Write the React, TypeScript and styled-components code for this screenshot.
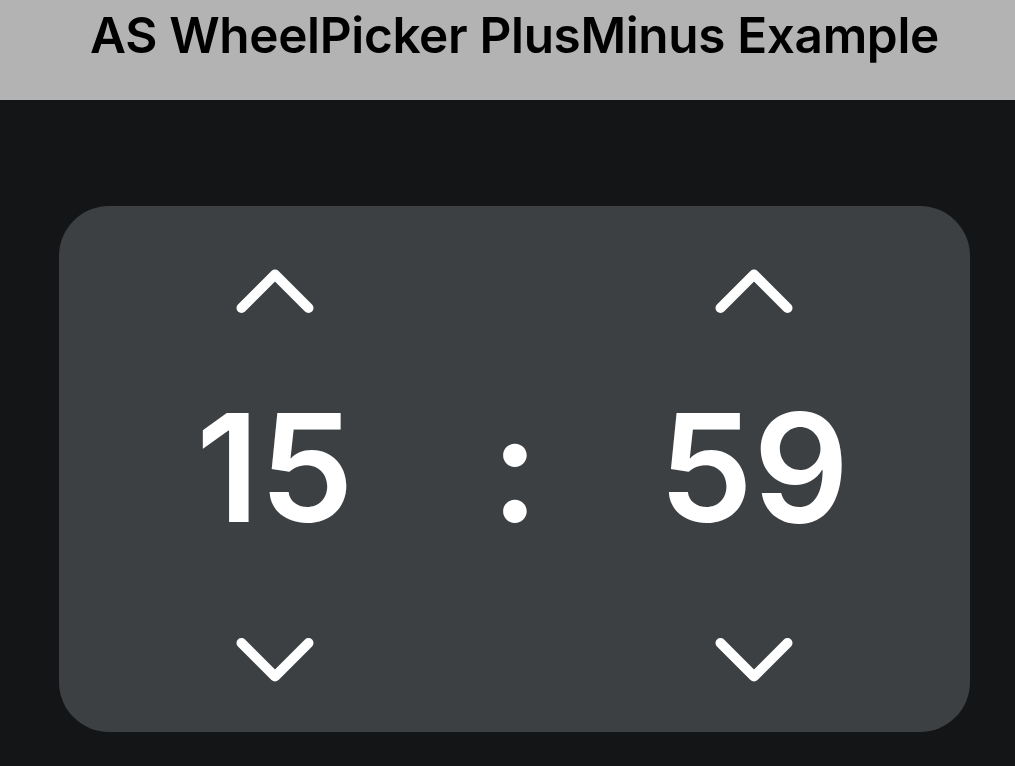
import React, { useState } from "react";
import styled, { createGlobalStyle } from "styled-components";

const GlobalStyle = createGlobalStyle`
  html, body {
    margin: 0;
    padding: 0;
    background: #141517;
  }
  body {
    font-family: Inter, "Noto Sans", sans-serif;
  }
`;

const pad = (n: number) => String(n).padStart(2, "0");

const Chevron: React.FC<{ down?: boolean }> = ({ down }) => (
  <svg width="84" height="48" viewBox="0 0 84 48">
    <polyline
      points={down ? "8.5,7 42,40.5 75.5,7" : "8.5,41 42,7.5 75.5,41"}
      fill="none"
      stroke="#ffffff"
      strokeWidth="10"
      strokeLinecap="round"
      strokeLinejoin="round"
    />
  </svg>
);

interface WheelProps {
  value: number;
  max: number;
  onChange: (v: number) => void;
}

const Wheel: React.FC<WheelProps> = ({ value, max, onChange }) => (
  <Column>
    <StepButton $up onClick={() => onChange(value >= max ? 0 : value + 1)}>
      <Chevron />
    </StepButton>
    <Digits>{pad(value)}</Digits>
    <StepButton onClick={() => onChange(value <= 0 ? max : value - 1)}>
      <Chevron down />
    </StepButton>
  </Column>
);

const App: React.FC = () => {
  const [hours, setHours] = useState(15);
  const [minutes, setMinutes] = useState(59);

  return (
    <>
      <GlobalStyle />
      <Header>
        <Title>AS WheelPicker PlusMinus Example</Title>
      </Header>
      <Main>
        <Card>
          <Wheel value={hours} max={23} onChange={setHours} />
          <Colon>:</Colon>
          <Wheel value={minutes} max={59} onChange={setMinutes} />
        </Card>
      </Main>
    </>
  );
};

export default App;

const Header = styled.header`
  height: 100px;
  background: #b3b3b3;
  display: flex;
  justify-content: center;
  align-items: flex-start;
  box-sizing: border-box;
  padding: 10px 0 0 14px;
`;

const Title = styled.h1`
  margin: 0;
  font-family: Inter, "Noto Sans", sans-serif;
  font-size: 49.5px;
  font-weight: 600;
  line-height: 50px;
  color: #000000;
  letter-spacing: -0.35px;
`;

const Main = styled.main`
  background: #141517;
  padding: 106px 45px 34px 59px;
`;

const Card = styled.div`
  height: 526px;
  background: #3d4043;
  border-radius: 50px;
  display: grid;
  grid-template-columns: 1fr 47px 1fr;
  align-items: start;
`;

const Column = styled.div`
  display: flex;
  flex-direction: column;
  align-items: center;
  padding-top: 61px;
`;

const StepButton = styled.button<{ $up?: boolean }>`
  background: none;
  border: none;
  padding: 0;
  cursor: pointer;
  display: flex;
  margin: ${(p) => (p.$up ? "0 0 78px" : "93px 0 0")};
`;

const Digits = styled.div`
  font-family: Inter, "Noto Sans", sans-serif;
  font-size: 150px;
  font-weight: 600;
  line-height: 150px;
  height: 150px;
  color: #ffffff;
`;

const Colon = styled.div`
  padding-top: 187px;
  text-align: center;
  font-family: Inter, "Noto Sans", sans-serif;
  font-size: 150px;
  font-weight: 600;
  line-height: 150px;
  color: #ffffff;
`;
